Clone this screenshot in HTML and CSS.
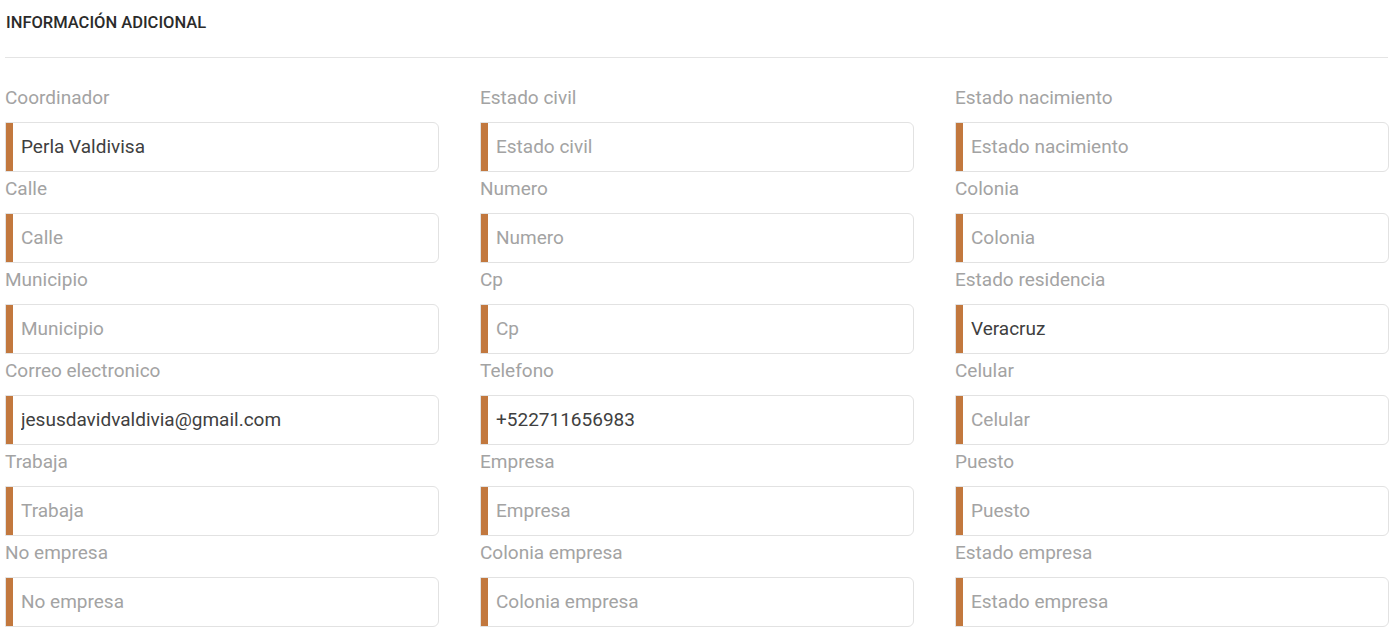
FILE: index.html
```html
<!DOCTYPE html>
<html lang="es">
<head>
<meta charset="utf-8">
<title>Información adicional</title>
<link rel="stylesheet" href="styles.css">
</head>
<body>
<div class="page">
  <h2 class="section-title">INFORMACIÓN ADICIONAL</h2>
  <hr class="divider">
  <form class="grid">
    <div class="field"><label>Coordinador</label><input type="text" value="Perla Valdivisa" placeholder="Coordinador"></div>
    <div class="field"><label>Estado civil</label><input type="text" placeholder="Estado civil"></div>
    <div class="field"><label>Estado nacimiento</label><input type="text" placeholder="Estado nacimiento"></div>

    <div class="field"><label>Calle</label><input type="text" placeholder="Calle"></div>
    <div class="field"><label>Numero</label><input type="text" placeholder="Numero"></div>
    <div class="field"><label>Colonia</label><input type="text" placeholder="Colonia"></div>

    <div class="field"><label>Municipio</label><input type="text" placeholder="Municipio"></div>
    <div class="field"><label>Cp</label><input type="text" placeholder="Cp"></div>
    <div class="field"><label>Estado residencia</label><input type="text" value="Veracruz" placeholder="Estado residencia"></div>

    <div class="field"><label>Correo electronico</label><input type="text" value="jesusdavidvaldivia@gmail.com" placeholder="Correo electronico"></div>
    <div class="field"><label>Telefono</label><input type="text" value="+522711656983" placeholder="Telefono"></div>
    <div class="field"><label>Celular</label><input type="text" placeholder="Celular"></div>

    <div class="field"><label>Trabaja</label><input type="text" placeholder="Trabaja"></div>
    <div class="field"><label>Empresa</label><input type="text" placeholder="Empresa"></div>
    <div class="field"><label>Puesto</label><input type="text" placeholder="Puesto"></div>

    <div class="field"><label>No empresa</label><input type="text" placeholder="No empresa"></div>
    <div class="field"><label>Colonia empresa</label><input type="text" placeholder="Colonia empresa"></div>
    <div class="field"><label>Estado empresa</label><input type="text" placeholder="Estado empresa"></div>
  </form>
</div>
</body>
</html>
```

FILE: styles.css
```css
* { box-sizing: border-box; }

html, body {
  margin: 0;
  padding: 0;
  background: #ffffff;
}

body {
  font-family: Roboto, "Liberation Sans", Arial, sans-serif;
  color: #333333;
}

.page {
  padding: 12px 4px 0 5px;
}

.section-title {
  margin: 0;
  font-size: 16.5px;
  line-height: 21px;
  font-weight: 500;
  color: #2b2b2b;
  padding-left: 1px;
}

.divider {
  margin: 24px 0 0 0;
  border: 0;
  border-top: 1px solid #e4e4e4;
  height: 0;
}

.grid {
  margin: 27px 0 0 0;
  display: grid;
  grid-template-columns: repeat(3, 434px);
  column-gap: 41px;
}

.field {
  display: flex;
  flex-direction: column;
  padding-bottom: 4px;
}

.field label {
  display: block;
  font-size: 19px;
  line-height: 24px;
  padding-top: 1px;
  color: #a3a3a3;
  margin-bottom: 12px;
}

.field input {
  display: block;
  width: 100%;
  height: 50px;
  margin: 0;
  padding: 0 10px 2px 15px;
  border: 1px solid #e2e2e2;
  border-radius: 0 6px 6px 0;
  box-shadow: inset 7px 0 0 #c2783e;
  background: #ffffff;
  font-family: Roboto, "Liberation Sans", Arial, sans-serif;
  font-size: 19px;
  color: #404040;
  outline: none;
}

.field input::placeholder {
  color: #a3a3a3;
  opacity: 1;
}
```
